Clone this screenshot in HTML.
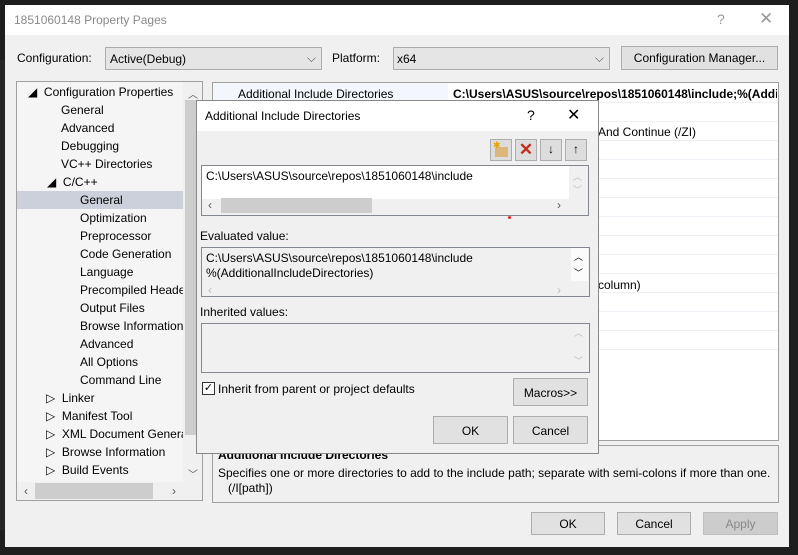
<!DOCTYPE html>
<html><head><style>
*{box-sizing:border-box;margin:0;padding:0}
body{width:798px;height:555px;background:#1e1e1e;position:relative;overflow:hidden;font-family:"Liberation Sans",sans-serif;font-size:12px;color:#000}
.a{position:absolute;white-space:nowrap}
.btn{position:absolute;background:#e1e1e1;border:1px solid #adadad;text-align:center}
.box{position:absolute;border:1px solid #a0a0a0}
</style></head><body>
<div class="a" style="left:0;top:60px;width:5px;height:470px;background:#252526"></div>
<div class="a" style="left:5px;top:5px;width:784px;height:542px;background:#f0f0f0"></div>
<div class="a" style="left:5px;top:5px;width:784px;height:30px;background:#fff"></div>
<div class="a" style="left:14px;top:13px;color:#8a8a8a">1851060148 Property Pages</div>
<div class="a" style="left:717px;top:11px;color:#999;font-size:14px">?</div>
<div class="a" style="left:759px;top:9px;color:#999;font-size:17px;font-weight:100">✕</div>

<div class="a" style="left:17px;top:51px">Configuration:</div>
<div class="box" style="left:105px;top:47px;width:217px;height:23px;background:#e5e5e5;border-color:#acacac"><span class="a" style="left:4px;top:4px">Active(Debug)</span><span class="a" style="right:5px;top:3px;color:#555">⌵</span></div>
<div class="a" style="left:332px;top:51px">Platform:</div>
<div class="box" style="left:393px;top:47px;width:217px;height:23px;background:#e5e5e5;border-color:#acacac"><span class="a" style="left:3px;top:4px">x64</span><span class="a" style="right:5px;top:3px;color:#555">⌵</span></div>
<div class="btn" style="left:621px;top:46px;width:157px;height:24px;padding-top:4px">Configuration Manager...</div>

<!-- tree -->
<div class="box" style="left:16px;top:81px;width:187px;height:420px;background:#f5f5f5;border-color:#a0a0a0"></div>
<div class="a" style="left:17px;top:191px;width:166px;height:18px;background:#ccd0da"></div>
<div class="a" style="left:28px;top:83px;line-height:18px">
<div>◢ &nbsp;Configuration Properties</div>
<div style="padding-left:33px">General</div><div style="padding-left:33px">Advanced</div><div style="padding-left:33px">Debugging</div><div style="padding-left:33px">VC++ Directories</div>
<div style="padding-left:19px">◢ &nbsp;C/C++</div>
<div style="padding-left:52px">General</div><div style="padding-left:52px">Optimization</div><div style="padding-left:52px">Preprocessor</div><div style="padding-left:52px">Code Generation</div><div style="padding-left:52px">Language</div><div style="padding-left:52px">Precompiled Heade</div><div style="padding-left:52px">Output Files</div><div style="padding-left:52px">Browse Information</div><div style="padding-left:52px">Advanced</div><div style="padding-left:52px">All Options</div><div style="padding-left:52px">Command Line</div>
<div style="padding-left:18px">▷ &nbsp;Linker</div><div style="padding-left:18px">▷ &nbsp;Manifest Tool</div><div style="padding-left:18px">▷ &nbsp;XML Document Genera</div><div style="padding-left:18px">▷ &nbsp;Browse Information</div><div style="padding-left:18px">▷ &nbsp;Build Events</div>
</div>
<div class="a" style="left:183px;top:82px;width:19px;height:400px;background:#f0f0f0"></div>
<div class="a" style="left:185px;top:100px;width:15px;height:335px;background:#cdcdcd"></div>
<div class="a" style="left:188px;top:86px;color:#555;font-size:10px">︿</div>
<div class="a" style="left:188px;top:466px;color:#555;font-size:10px">﹀</div>
<div class="a" style="left:17px;top:482px;width:185px;height:18px;background:#f0f0f0"></div>
<div class="a" style="left:35px;top:483px;width:118px;height:16px;background:#cdcdcd"></div>
<div class="a" style="left:24px;top:484px;color:#555">‹</div><div class="a" style="left:172px;top:484px;color:#555">›</div>

<!-- grid -->
<div class="box" style="left:212px;top:82px;width:567px;height:359px;background:#fff"></div>
<div class="a" style="left:213px;top:83px;width:235px;height:19px;background:#f3f6fc"></div>
<div class="a" style="left:238px;top:87px">Additional Include Directories</div>
<div class="a" style="left:453px;top:87px;font-weight:bold;width:324px;overflow:hidden">C:\Users\ASUS\source\repos\1851060148\include;%(AdditionalIncludeDirectories)</div>
<div class="a" style="left:213px;top:102px;width:565px;height:1px;background:#eef0f6"></div>
<div class="a" style="left:213px;top:121px;width:565px;height:1px;background:#eef0f6"></div>
<div class="a" style="left:598px;top:125px">And Continue (/ZI)</div>
<div class="a" style="left:213px;top:140px;width:565px;height:1px;background:#eef0f6"></div>
<div class="a" style="left:213px;top:159px;width:565px;height:1px;background:#eef0f6"></div>
<div class="a" style="left:213px;top:178px;width:565px;height:1px;background:#eef0f6"></div>
<div class="a" style="left:213px;top:197px;width:565px;height:1px;background:#eef0f6"></div>
<div class="a" style="left:213px;top:216px;width:565px;height:1px;background:#eef0f6"></div>
<div class="a" style="left:213px;top:235px;width:565px;height:1px;background:#eef0f6"></div>
<div class="a" style="left:213px;top:254px;width:565px;height:1px;background:#eef0f6"></div>
<div class="a" style="left:213px;top:273px;width:565px;height:1px;background:#eef0f6"></div>
<div class="a" style="left:598px;top:278px">column)</div>
<div class="a" style="left:213px;top:292px;width:565px;height:1px;background:#eef0f6"></div>
<div class="a" style="left:213px;top:311px;width:565px;height:1px;background:#eef0f6"></div>
<div class="a" style="left:213px;top:330px;width:565px;height:1px;background:#eef0f6"></div>
<div class="a" style="left:213px;top:349px;width:565px;height:1px;background:#eef0f6"></div>

<div class="box" style="left:212px;top:445px;width:567px;height:58px"></div>
<div class="a" style="left:218px;top:448px;font-weight:bold">Additional Include Directories</div>
<div class="a" style="left:218px;top:466px">Specifies one or more directories to add to the include path; separate with semi-colons if more than one.</div>
<div class="a" style="left:228px;top:481px">(/I[path])</div>

<div class="btn" style="left:531px;top:512px;width:74px;height:23px;padding-top:4px">OK</div>
<div class="btn" style="left:617px;top:512px;width:74px;height:23px;padding-top:4px">Cancel</div>
<div class="btn" style="left:703px;top:512px;width:75px;height:23px;padding-top:4px;background:#ccc;border-color:#bfbfbf;color:#888">Apply</div>

<!-- dialog -->
<div class="a" style="left:196px;top:100px;width:403px;height:354px;background:#f0f0f0;border:1px solid #888"></div>
<div class="a" style="left:197px;top:101px;width:401px;height:30px;background:#fff"></div>
<div class="a" style="left:205px;top:109px">Additional Include Directories</div>
<div class="a" style="left:527px;top:107px;font-size:14px">?</div>
<div class="a" style="left:567px;top:105px;font-size:16px">✕</div>
<div class="btn" style="left:490px;top:139px;width:22px;height:22px;background:#ddd"><div class="a" style="left:4px;top:7px;width:13px;height:10px;background:#dcb67a"></div><div class="a" style="left:2px;top:0;color:#e8a000;font-size:9px">✱</div></div>
<div class="btn" style="left:515px;top:139px;width:22px;height:22px;background:#ddd;color:#c42b1c;font-size:17px;font-weight:bold;line-height:19px">✕</div>
<div class="btn" style="left:540px;top:139px;width:22px;height:22px;background:#ddd;font-weight:bold;line-height:19px">↓</div>
<div class="btn" style="left:565px;top:139px;width:22px;height:22px;background:#ddd;font-weight:bold;line-height:19px">↑</div>

<div class="box" style="left:201px;top:165px;width:388px;height:51px;background:#f0f0f0;border-color:#828790"></div>
<div class="a" style="left:202px;top:166px;width:367px;height:33px;background:#fff"></div>
<div class="a" style="left:206px;top:169px">C:\Users\ASUS\source\repos\1851060148\include</div>
<div class="a" style="left:221px;top:198px;width:151px;height:15px;background:#cdcdcd"></div>
<div class="a" style="left:208px;top:198px;color:#555">‹</div><div class="a" style="left:557px;top:198px;color:#555">›</div>
<div class="a" style="left:573px;top:170px;color:#bbb;font-size:9px">︿</div><div class="a" style="left:573px;top:183px;color:#bbb;font-size:9px">﹀</div>
<div class="a" style="left:508px;top:216px;width:3px;height:3px;background:#e22;border-radius:2px"></div>

<div class="a" style="left:200px;top:229px">Evaluated value:</div>
<div class="box" style="left:201px;top:247px;width:389px;height:50px;border-color:#828790"></div>
<div class="a" style="left:571px;top:248px;width:17px;height:33px;background:#fbfbfb"></div>
<div class="a" style="left:206px;top:251px;line-height:15px">C:\Users\ASUS\source\repos\1851060148\include<br>%(AdditionalIncludeDirectories)</div>
<div class="a" style="left:574px;top:250px;font-size:9px">︿</div><div class="a" style="left:574px;top:266px;font-size:9px">﹀</div>
<div class="a" style="left:208px;top:283px;color:#bbb">‹</div><div class="a" style="left:557px;top:283px;color:#bbb">›</div>

<div class="a" style="left:200px;top:305px">Inherited values:</div>
<div class="box" style="left:201px;top:323px;width:389px;height:50px;border-color:#828790"></div>
<div class="a" style="left:574px;top:326px;color:#bbb;font-size:9px">︿</div><div class="a" style="left:574px;top:354px;color:#bbb;font-size:9px">﹀</div>

<div class="a" style="left:202px;top:382px;width:13px;height:13px;border:1px solid #333;background:#fff;font-size:11px;line-height:11px;text-align:center">✓</div>
<div class="a" style="left:218px;top:382px">Inherit from parent or project defaults</div>
<div class="btn" style="left:513px;top:378px;width:75px;height:28px;padding-top:7px">Macros&gt;&gt;</div>
<div class="btn" style="left:433px;top:416px;width:75px;height:28px;padding-top:7px">OK</div>
<div class="btn" style="left:513px;top:416px;width:75px;height:28px;padding-top:7px">Cancel</div>
</body></html>
